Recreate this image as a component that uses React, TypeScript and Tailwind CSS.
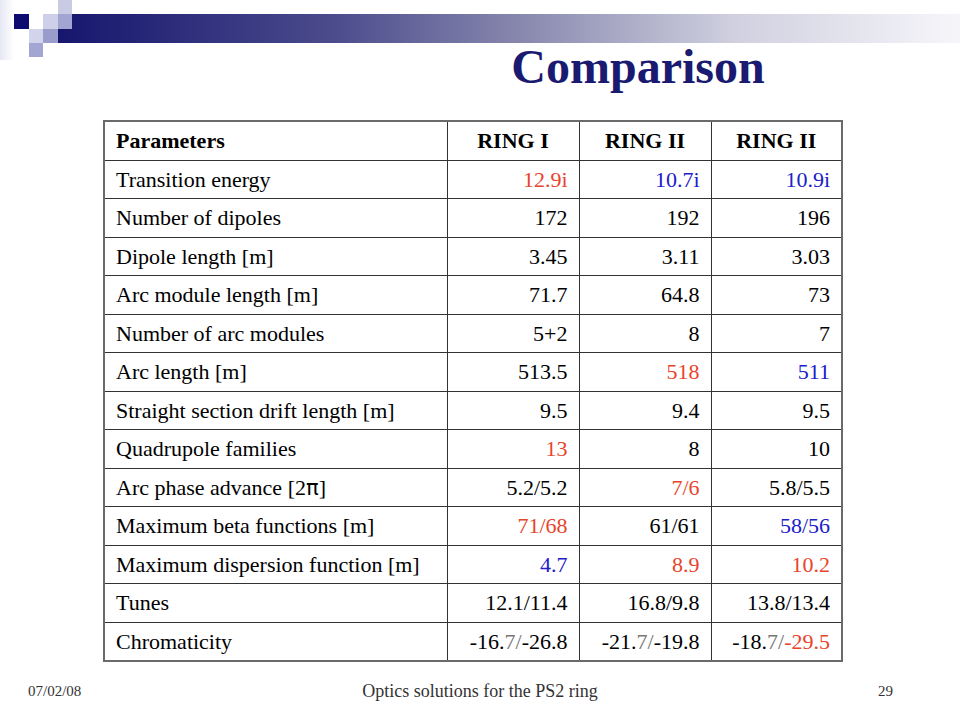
import React from "react";

type Cell = { t: React.ReactNode; c?: string };

const R = "text-[#e8442b]";
const B = "text-[#2020c8]";

const rows: { label: React.ReactNode; v: Cell[] }[] = [
  { label: "Transition energy", v: [{ t: "12.9i", c: R }, { t: "10.7i", c: B }, { t: "10.9i", c: B }] },
  { label: "Number of  dipoles", v: [{ t: "172" }, { t: "192" }, { t: "196" }] },
  { label: "Dipole length [m]", v: [{ t: "3.45" }, { t: "3.11" }, { t: "3.03" }] },
  { label: "Arc module length [m]", v: [{ t: "71.7" }, { t: "64.8" }, { t: "73" }] },
  { label: "Number of  arc modules", v: [{ t: "5+2" }, { t: "8" }, { t: "7" }] },
  { label: "Arc length [m]", v: [{ t: "513.5" }, { t: "518", c: R }, { t: "511", c: B }] },
  { label: "Straight section drift length [m]", v: [{ t: "9.5" }, { t: "9.4" }, { t: "9.5" }] },
  { label: "Quadrupole families", v: [{ t: "13", c: R }, { t: "8" }, { t: "10" }] },
  {
    label: (
      <>
        Arc phase advance [2<span className="font-['DejaVu_Sans',sans-serif] text-[21px]">π</span>]
      </>
    ),
    v: [{ t: "5.2/5.2" }, { t: "7/6", c: R }, { t: "5.8/5.5" }],
  },
  { label: "Maximum beta functions [m]", v: [{ t: "71/68", c: R }, { t: "61/61" }, { t: "58/56", c: B }] },
  { label: "Maximum dispersion function [m]", v: [{ t: "4.7", c: B }, { t: "8.9", c: R }, { t: "10.2", c: R }] },
  { label: "Tunes", v: [{ t: "12.1/11.4" }, { t: "16.8/9.8" }, { t: "13.8/13.4" }] },
  {
    label: "Chromaticity",
    v: [
      { t: <>-16.<span className="text-[#777]">7/</span>-26.8</> },
      { t: <>-21.<span className="text-[#777]">7/</span>-19.8</> },
      { t: <>-18.<span className="text-[#777]">7/</span><span className={R}>-29.5</span></> },
    ],
  },
];

function Decoration() {
  return (
    <svg width="960" height="60" viewBox="0 0 960 60" className="block">
      <defs>
        <linearGradient id="band" x1="0" x2="1" y1="0" y2="0">
          <stop offset="0" stopColor="#16166e" />
          <stop offset="0.3" stopColor="#4a4a8c" />
          <stop offset="0.5" stopColor="#8484ac" />
          <stop offset="0.75" stopColor="#d0d0e0" />
          <stop offset="1" stopColor="#f6f6fa" />
        </linearGradient>
        <linearGradient id="strip2" x1="0" x2="1" y1="0" y2="0">
          <stop offset="0" stopColor="#e6e8f4" />
          <stop offset="1" stopColor="#ffffff" />
        </linearGradient>
      </defs>
      <rect x="0" y="0" width="14" height="60" fill="url(#strip2)" />
      <rect x="58" y="14" width="902" height="29" fill="url(#band)" />
      <rect x="58" y="0" width="14" height="14" fill="#c9cbe5" />
      <rect x="14" y="14" width="15" height="15" fill="#0b0b70" />
      <rect x="43" y="14" width="15" height="15" fill="#cdd0e8" />
      <rect x="58" y="14" width="14" height="15" fill="#a2a5d2" />
      <rect x="29" y="29" width="14" height="14" fill="#d2d4ec" />
      <rect x="43" y="29" width="15" height="14" fill="#9a9dcc" />
      <rect x="29" y="43" width="14" height="14" fill="#a3a6d2" />
    </svg>
  );
}

export default function App() {
  return (
    <div className="relative w-[960px] h-[720px] bg-white overflow-hidden font-['Liberation_Serif',serif] text-black">
      <div className="absolute left-0 top-0">
        <Decoration />
      </div>
      <div className="flex flex-col">
        <div className="h-[44px]" />
        <div className="pl-[316px] text-center text-[48px] leading-[46px] font-bold text-[#1a1a70]">Comparison</div>
        <div className="h-[30px]" />
        <div className="pl-[103px]">
          <table className="table-fixed border-collapse w-[738px] border-2 border-[#6a6a6a]">
            <colgroup>
              <col className="w-[343px]" />
              <col className="w-[132px]" />
              <col className="w-[132px]" />
              <col className="w-[131px]" />
            </colgroup>
            <thead>
              <tr className="h-[39px]">
                <th className="border border-[#333] text-left font-bold text-[22px] pl-[11px]">Parameters</th>
                <th className="border border-[#333] text-center font-bold text-[22px]">RING I</th>
                <th className="border border-[#333] text-center font-bold text-[22px]">RING II</th>
                <th className="border border-[#333] text-center font-bold text-[22px]">RING II</th>
              </tr>
            </thead>
            <tbody>
              {rows.map((r, i) => (
                <tr key={i} className="h-[38.5px]">
                  <td className="border border-[#333] text-left text-[22px] pl-[11px] whitespace-nowrap">{r.label}</td>
                  {r.v.map((c, j) => (
                    <td key={j} className={`border border-[#333] text-right text-[22px] pr-[11px] whitespace-nowrap ${c.c ?? ""}`}>
                      {c.t}
                    </td>
                  ))}
                </tr>
              ))}
            </tbody>
          </table>
        </div>
        <div className="flex items-center h-[40px] mt-[10px] text-[#333]">
          <div className="w-[250px] pl-[28px] text-[15px]">07/02/08</div>
          <div className="flex-1 text-center text-[18px]">Optics solutions for the PS2 ring</div>
          <div className="w-[250px] text-right pr-[67px] text-[15px]">29</div>
        </div>
      </div>
    </div>
  );
}
